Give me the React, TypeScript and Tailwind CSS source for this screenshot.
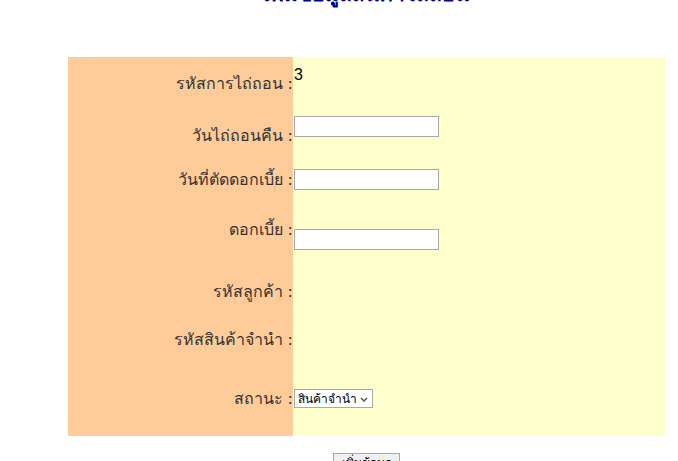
import React from "react";

const font = { fontFamily: "Tahoma, 'DejaVu Sans', 'Liberation Sans', sans-serif" };

function Label({ text, h }: { text: string; h: string }) {
  return (
    <div className={`bg-[#ffcc99] flex items-center justify-end text-[16px] text-[#333333] ${h}`}>
      <span>{text} :</span>
    </div>
  );
}

export default function App() {
  return (
    <div className="w-[678px] h-[461px] overflow-hidden bg-white relative" style={font}>
      <div className="absolute left-[68px] w-[597px] top-[-21px] text-center text-[21px] font-bold text-[#000080] whitespace-pre">
        {"-  เพิ่มข้อมูลสินค้าไถ่ถอน  -"}
      </div>
      <div className="pt-[57px] pl-[68px]">
        <div className="grid grid-cols-[225px_372px]">
          <Label text="รหัสการไถ่ถอน" h="h-[51px] pt-[3px]" />
          <div className="bg-[#ffffcc] h-[51px] pt-[6px] pl-[1px] text-[16px] text-black" style={{ fontFamily: "'Liberation Sans', Arial, sans-serif" }}>3</div>

          <Label text="วันไถ่ถอนคืน" h="h-[52px] pt-[3px]" />
          <div className="bg-[#ffffcc] h-[52px] pt-[8px] pl-[1px]">
            <input className="block w-[145px] h-[21px] bg-white border border-[#a9a9a9]" />
          </div>

          <Label text="วันที่ตัดดอกเบี้ย" h="h-[40px]" />
          <div className="bg-[#ffffcc] h-[40px] pt-[9px] pl-[1px]">
            <input className="block w-[145px] h-[21px] bg-white border border-[#a9a9a9]" />
          </div>

          <Label text="ดอกเบี้ย" h="h-[66px] pb-[6px]" />
          <div className="bg-[#ffffcc] h-[66px] pt-[29px] pl-[1px]">
            <input className="block w-[145px] h-[21px] bg-white border border-[#a9a9a9]" />
          </div>

          <Label text="รหัสลูกค้า" h="h-[52px]" />
          <div className="bg-[#ffffcc] h-[52px]" />

          <Label text="รหัสสินค้าจำนำ" h="h-[44px]" />
          <div className="bg-[#ffffcc] h-[44px]" />

          <Label text="สถานะ" h="h-[74px]" />
          <div className="bg-[#ffffcc] h-[74px] pt-[27px] pl-[1px]">
            <div className="relative flex w-[79px] h-[19px]">
              <select className="block appearance-none w-[79px] h-[19px] bg-white border border-[#a9a9a9] text-[12px] text-black pl-[3px] pr-[14px] py-0" defaultValue="a">
                <option value="a">สินค้าจำนำ</option>
              </select>
              <svg className="absolute right-[5px] top-[8px] pointer-events-none" width="8" height="5" viewBox="0 0 8 5">
                <path d="M1 1 L4 4 L7 1" fill="none" stroke="#555" strokeWidth="1.5" />
              </svg>
            </div>
          </div>
        </div>
      </div>
      <div className="absolute left-[333px] top-[450px]">
        <button className="w-[67px] h-[24px] bg-[#efefef] border border-[#a9a9a9] text-[12px] text-black leading-none pb-[4px]">เพิ่มข้อมูล</button>
      </div>
    </div>
  );
}
